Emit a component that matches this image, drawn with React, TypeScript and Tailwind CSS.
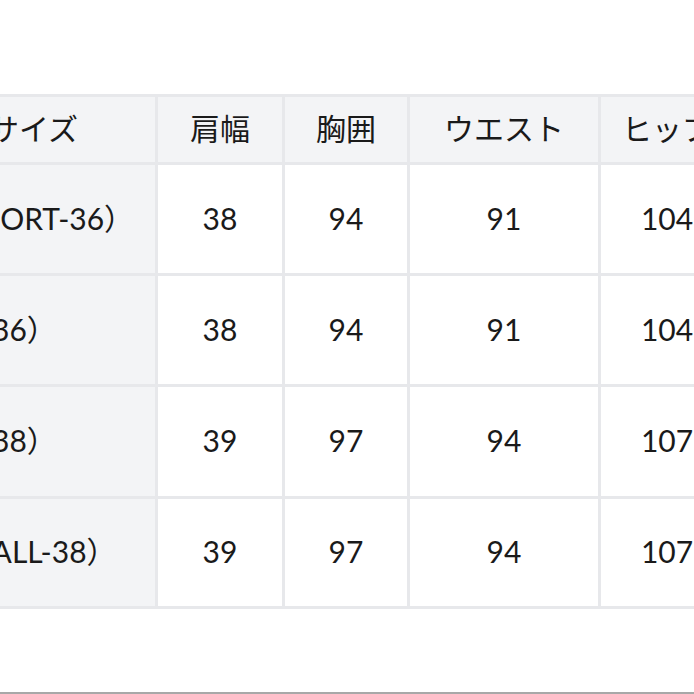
import React from "react";

const headers = ["肩幅", "胸囲", "ウエスト", "ヒップ"];
const rows: { label: string; pl: string; values: string[] }[] = [
  { label: "（SHORT-36）", pl: "pl-[36px]", values: ["38", "94", "91", "104"] },
  { label: "（36）", pl: "pl-[67px]", values: ["38", "94", "91", "104"] },
  { label: "（38）", pl: "pl-[67px]", values: ["39", "97", "94", "107"] },
  { label: "（TALL-38）", pl: "pl-[51px]", values: ["39", "97", "94", "107"] },
];

export default function App() {
  return (
    <div
      className="w-[694px] h-[694px] overflow-hidden bg-white flex flex-col text-[#1a1a1a]"
      style={{ fontFamily: "Lato, 'Noto Sans CJK JP', sans-serif" }}
    >
      <div className="mt-[94px] ml-[-108px] w-max grid grid-cols-[260px_124px_122px_188px_132px] grid-rows-[65px_108px_108px_109px_107px] gap-[3px] p-[3px] bg-[#e7e8eb] text-[30px] leading-none">
        <div className="bg-[#f3f4f6] flex items-center pb-[3px] pl-[94px] whitespace-nowrap">サイズ</div>
        {headers.map((h) => (
          <div key={h} className="bg-[#f3f4f6] flex items-center justify-center pb-[3px] whitespace-nowrap">
            {h}
          </div>
        ))}
        {rows.map((r, i) => (
          <React.Fragment key={i}>
            <div className={`bg-[#f3f4f6] flex items-center pb-[3px] whitespace-nowrap ${r.pl}`}>{r.label}</div>
            {r.values.map((v, j) => (
              <div key={j} className="bg-white flex items-center justify-center pb-[3px]">
                {v}
              </div>
            ))}
          </React.Fragment>
        ))}
      </div>
      <div className="mt-auto h-[2px] bg-[#a8a8a8]" />
    </div>
  );
}
